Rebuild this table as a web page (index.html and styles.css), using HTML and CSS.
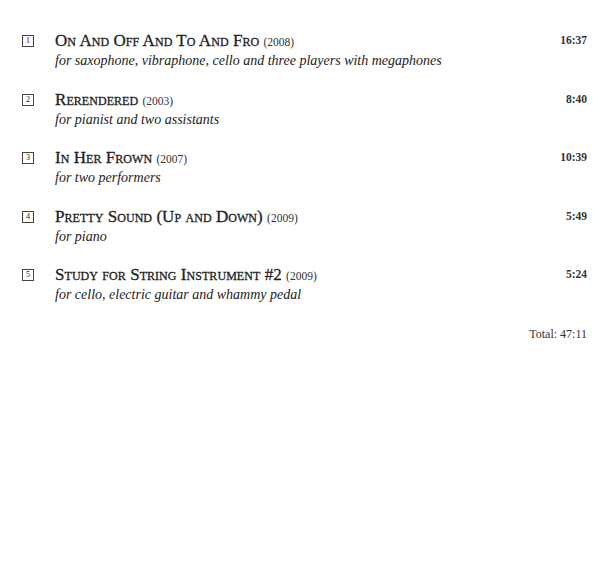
FILE: index.html
```html
<!DOCTYPE html>
<html>
<head>
<meta charset="utf-8">
<link rel="stylesheet" href="styles.css">
</head>
<body>
<div class="tracklist">
  <div class="track">
    <span class="num">1</span>
    <div class="info">
      <div class="title">On And Off And To And Fro <span class="year">(2008)</span></div>
      <div class="sub">for saxophone, vibraphone, cello and three players with megaphones</div>
    </div>
    <span class="dur">16:37</span>
  </div>
  <div class="track">
    <span class="num">2</span>
    <div class="info">
      <div class="title">Rerendered <span class="year">(2003)</span></div>
      <div class="sub">for pianist and two assistants</div>
    </div>
    <span class="dur">8:40</span>
  </div>
  <div class="track">
    <span class="num">3</span>
    <div class="info">
      <div class="title">In Her Frown <span class="year">(2007)</span></div>
      <div class="sub">for two performers</div>
    </div>
    <span class="dur">10:39</span>
  </div>
  <div class="track">
    <span class="num">4</span>
    <div class="info">
      <div class="title">Pretty Sound (Up and Down) <span class="year">(2009)</span></div>
      <div class="sub">for piano</div>
    </div>
    <span class="dur">5:49</span>
  </div>
  <div class="track">
    <span class="num">5</span>
    <div class="info">
      <div class="title">Study for String Instrument #2 <span class="year">(2009)</span></div>
      <div class="sub">for cello, electric guitar and whammy pedal</div>
    </div>
    <span class="dur">5:24</span>
  </div>
  <div class="total">Total: 47:11</div>
</div>
</body>
</html>
```
FILE: styles.css
```css
html, body {
  margin: 0;
  padding: 0;
  background: #fff;
}
body {
  font-family: "Liberation Serif", "DejaVu Serif", serif;
  color: #222;
}
.tracklist {
  padding: 31px 13px 0 22px;
  display: flex;
  flex-direction: column;
}
.track {
  display: flex;
  align-items: flex-start;
  height: 58.5px;
}
.num {
  box-sizing: border-box;
  width: 12px;
  height: 12px;
  border: 1px solid #444;
  font-size: 8px;
  line-height: 10px;
  text-align: center;
  margin-top: 4px;
  flex: none;
}
.info {
  flex: 1;
  margin-left: 21px;
}
.title {
  font-variant: small-caps;
  font-size: 17px;
  line-height: 19px;
  letter-spacing: 0.05px;
  font-weight: normal;
  color: #1e1e1e;
  -webkit-text-stroke: 0.3px #1e1e1e;
}
.title .year {
  font-size: 11.5px;
  font-variant: normal;
  letter-spacing: 0;
  font-weight: normal;
  -webkit-text-stroke: 0;
  color: #333;
}
.sub {
  font-style: italic;
  font-size: 14px;
  line-height: 18px;
  color: #222;
}
.dur {
  font-size: 11.5px;
  font-weight: bold;
  line-height: 19px;
  color: #333;
}
.total {
  align-self: flex-end;
  font-size: 12px;
  margin-top: 3px;
  color: #333;
}
```
